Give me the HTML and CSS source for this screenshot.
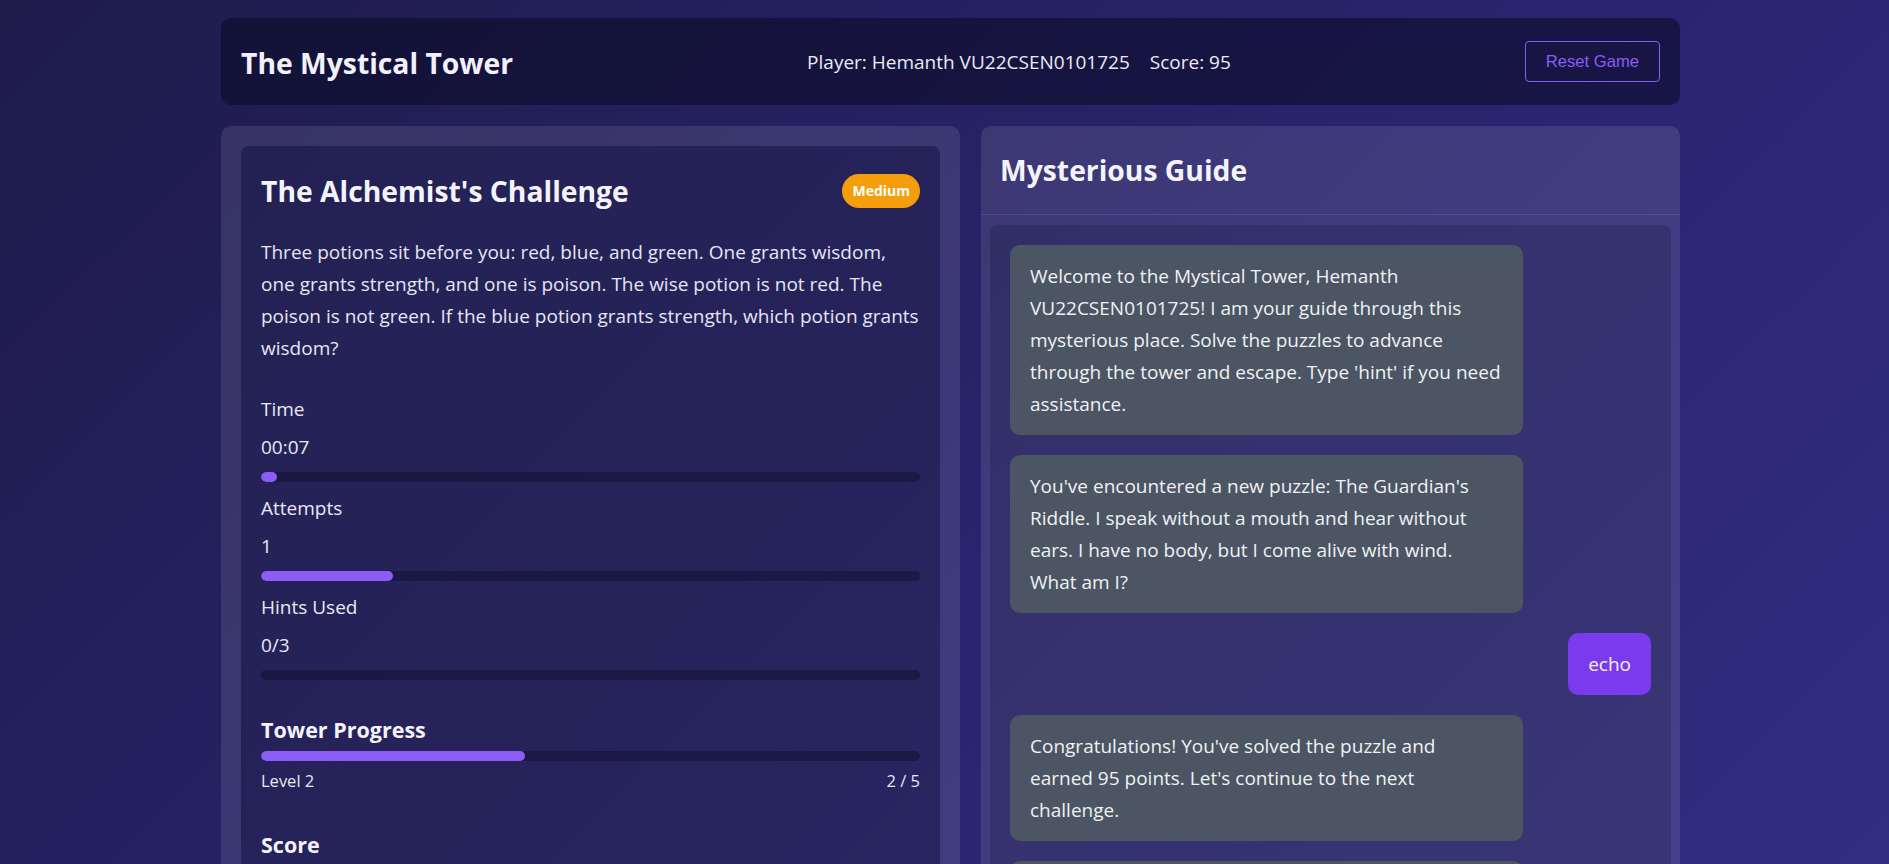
FILE: index.html
```html
<!DOCTYPE html>
<html lang="en">
<head>
<meta charset="utf-8">
<title>The Mystical Tower</title>
<link rel="stylesheet" href="styles.css">
</head>
<body>
<div class="app">
  <header class="topbar">
    <h1 class="brand">The Mystical Tower</h1>
    <div class="player-info">
      <span>Player: Hemanth VU22CSEN0101725</span>
      <span>Score: 95</span>
    </div>
    <button class="reset-btn">Reset Game</button>
  </header>

  <main class="layout">
    <section class="panel puzzle-panel">
      <div class="puzzle-card">
        <div class="puzzle-head">
          <h2 class="puzzle-title">The Alchemist's Challenge</h2>
          <span class="badge">Medium</span>
        </div>
        <p class="puzzle-text">Three potions sit before you: red, blue, and green. One grants wisdom, one grants strength, and one is poison. The wise potion is not red. The poison is not green. If the blue potion grants strength, which potion grants wisdom?</p>

        <div class="stats">
          <div class="stat">
            <div class="stat-label">Time</div>
            <div class="stat-value">00:07</div>
            <div class="bar"><div class="fill" style="width:2.4%"></div></div>
          </div>
          <div class="stat">
            <div class="stat-label">Attempts</div>
            <div class="stat-value">1</div>
            <div class="bar"><div class="fill" style="width:20%"></div></div>
          </div>
          <div class="stat">
            <div class="stat-label">Hints Used</div>
            <div class="stat-value">0/3</div>
            <div class="bar"><div class="fill" style="width:0%"></div></div>
          </div>
        </div>

        <div class="section">
          <h3 class="section-title">Tower Progress</h3>
          <div class="bar progress-bar"><div class="fill" style="width:40%"></div></div>
          <div class="progress-labels"><span>Level 2</span><span>2 / 5</span></div>
        </div>

        <div class="section">
          <h3 class="section-title">Score</h3>
          <div class="score-value">95</div>
        </div>
      </div>
    </section>

    <section class="panel chat-panel">
      <div class="chat-header">
        <h2 class="chat-title">Mysterious Guide</h2>
      </div>
      <div class="chat-messages">
        <div class="msg guide">Welcome to the Mystical Tower, Hemanth VU22CSEN0101725! I am your guide through this mysterious place. Solve the puzzles to advance through the tower and escape. Type 'hint' if you need assistance.</div>
        <div class="msg guide">You've encountered a new puzzle: The Guardian's Riddle. I speak without a mouth and hear without ears. I have no body, but I come alive with wind. What am I?</div>
        <div class="msg user">echo</div>
        <div class="msg guide">Congratulations! You've solved the puzzle and earned 95 points. Let's continue to the next challenge.</div>
        <div class="msg guide">You've encountered a new puzzle: The Alchemist's Challenge. Three potions sit before you: red, blue, and green.</div>
      </div>
    </section>
  </main>
</div>
</body>
</html>
```

FILE: styles.css
```css
* {
  box-sizing: border-box;
}

html, body {
  height: 100%;
}

body {
  margin: 0;
  padding: 18px 0 0 12px;
  overflow: hidden;
  font-family: "Segoe UI", "Open Sans", sans-serif;
  font-size: 19px;
  line-height: 32px;
  color: #e8e8f4;
  background: linear-gradient(135deg, #1e1b4b 0%, #2a2570 60%, #312e81 100%);
  background-attachment: fixed;
}

.app {
  width: 1459px;
  margin: 0 auto;
}

/* Top bar */
.topbar {
  display: flex;
  align-items: center;
  justify-content: space-between;
  height: 87px;
  padding: 0 20px;
  background: rgba(10, 10, 35, 0.55);
  border-radius: 10px;
}

.brand {
  margin: 2px 0 0;
  font-size: 28.3px;
  font-weight: 700;
  line-height: 50px;
  color: #f2f1fb;
}

.player-info {
  display: flex;
  gap: 20px;
  font-size: 19px;
  color: #eceaf6;
}

.reset-btn {
  height: 41px;
  padding: 0 20px;
  font-family: "Liberation Sans", Arial, sans-serif;
  font-size: 16.6px;
  color: #8b5cf6;
  background: transparent;
  border: 1px solid #8b5cf6;
  border-radius: 4px;
}

/* Two column layout */
.layout {
  display: grid;
  grid-template-columns: 739px 1fr;
  gap: 21px;
  margin-top: 21px;
}

.panel {
  background: rgba(255, 255, 255, 0.1);
  border-radius: 10px;
  min-height: 900px;
}

.puzzle-panel {
  padding: 20px;
}

.puzzle-card {
  padding: 20px;
  background: rgba(20, 18, 70, 0.55);
  border-radius: 8px;
  min-height: 900px;
}

.puzzle-head {
  display: flex;
  align-items: center;
  justify-content: space-between;
}

.puzzle-title {
  margin: 0;
  font-size: 28.3px;
  font-weight: 700;
  line-height: 50.4px;
  color: #f4f3fc;
}

.badge {
  padding: 4px 10px;
  font-size: 14px;
  font-weight: 700;
  line-height: 26px;
  color: #fff;
  background: #f59e0b;
  border-radius: 17px;
}

.puzzle-text {
  margin: 19.6px 0 0;
  color: #e6e5f3;
}

.stats {
  margin-top: 29px;
}

.stat + .stat {
  margin-top: 10px;
}

.stat-label {
  margin-bottom: 6px;
}

.bar {
  height: 10px;
  margin-top: 9px;
  background: rgba(15, 14, 45, 0.5);
  border-radius: 5px;
  overflow: hidden;
}

.fill {
  height: 100%;
  background: #8b5cf6;
  border-radius: 5px;
}

.section {
  margin-top: 32px;
}

.section-title {
  margin: 0;
  font-size: 21.5px;
  font-weight: 700;
  line-height: 36px;
  color: #f4f3fc;
}

.progress-bar {
  margin-top: 3px;
}

.progress-labels {
  display: flex;
  justify-content: space-between;
  margin-top: 5px;
  font-size: 16.5px;
  line-height: 29px;
}

.score-value {
  margin-top: 8px;
  font-size: 24px;
  font-weight: 700;
}

/* Chat */
.chat-panel {
  display: flex;
  flex-direction: column;
}

.chat-header {
  padding: 19px 19px 18.5px;
  border-bottom: 1px solid rgba(255, 255, 255, 0.1);
}

.chat-title {
  margin: 0;
  font-size: 28.3px;
  font-weight: 700;
  line-height: 50.4px;
  color: #f4f3fc;
}

.chat-messages {
  display: flex;
  flex-direction: column;
  gap: 20px;
  margin: 10px 9px 0;
  padding: 20px;
  background: rgba(20, 18, 60, 0.25);
  border-radius: 8px;
}

.msg {
  max-width: 80%;
  padding: 15px 20px;
  border-radius: 10px;
  color: #f1f1f5;
}

.msg.guide {
  align-self: flex-start;
  background: #4b5563;
}

.msg.user {
  align-self: flex-end;
  background: #7c3aed;
}
```
